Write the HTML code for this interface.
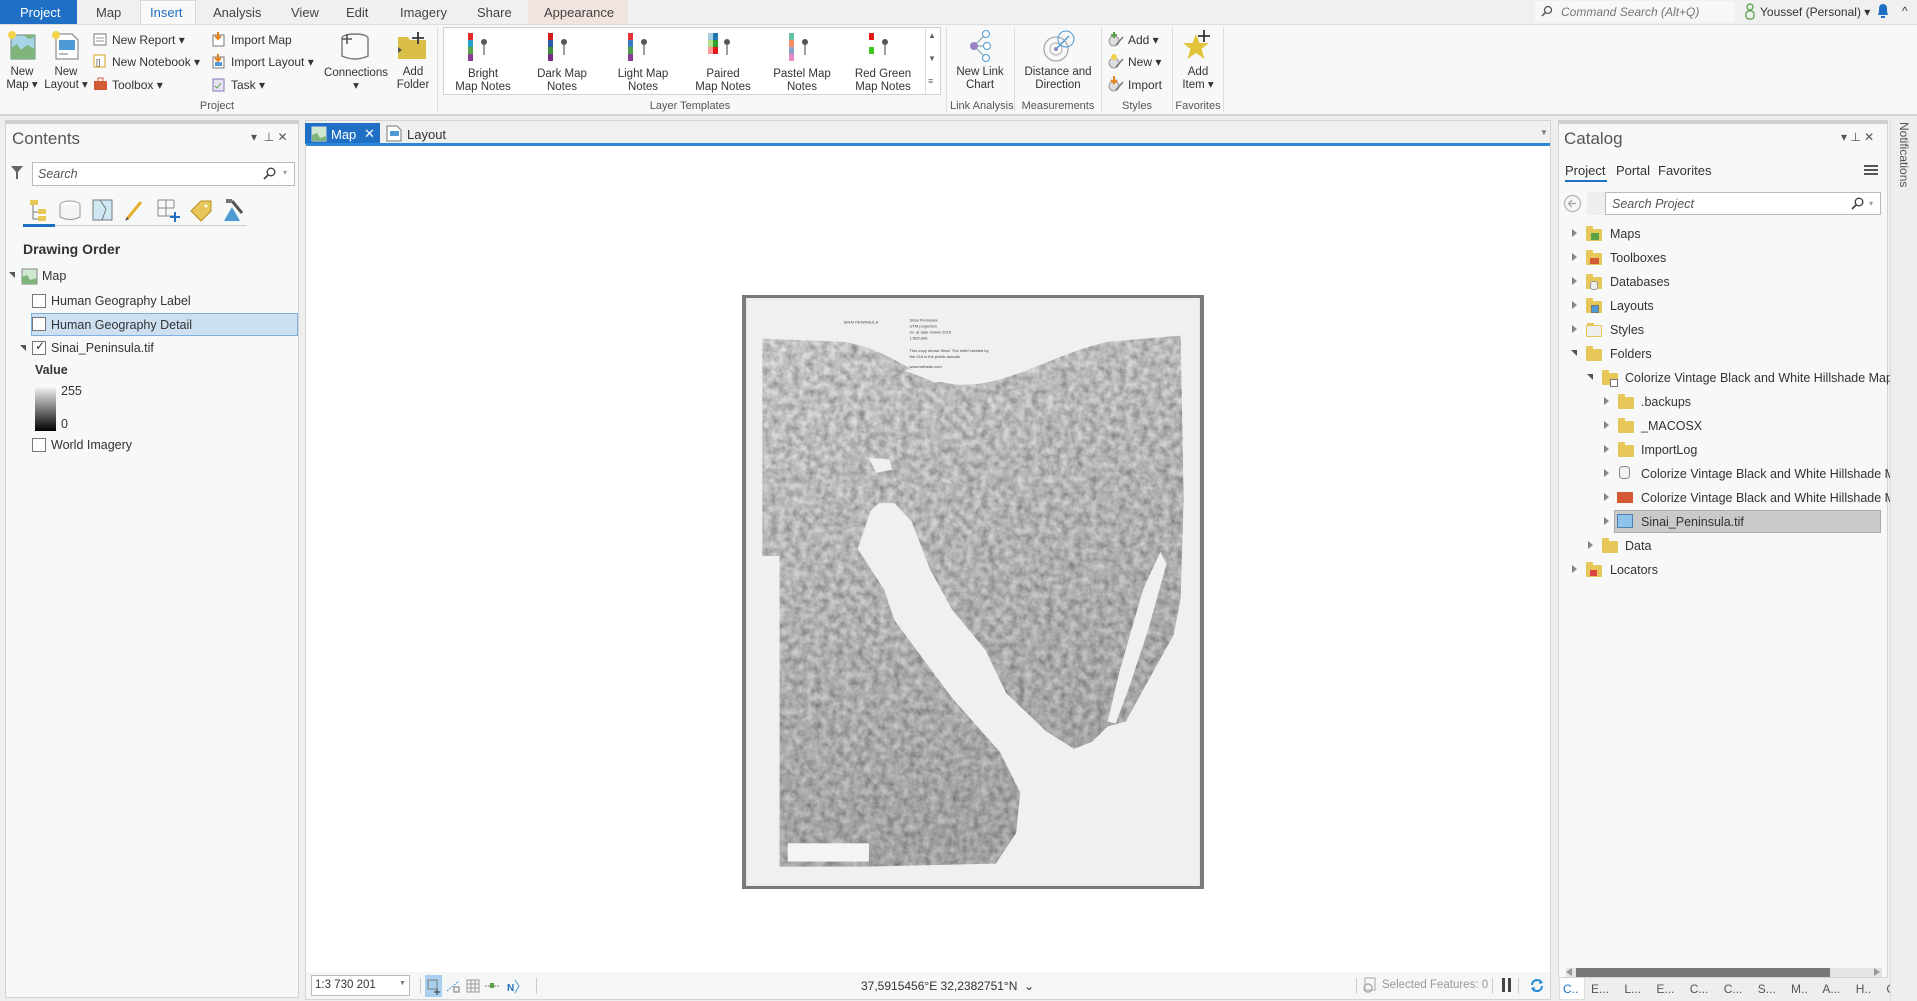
<!DOCTYPE html>
<html><head><meta charset="utf-8"><style>
*{box-sizing:border-box;margin:0;padding:0}
body{width:1917px;height:1001px;overflow:hidden;background:#eeeeee;font-family:"Liberation Sans",sans-serif;color:#333;position:relative}
.a{position:absolute;white-space:nowrap}
.t{font-size:13px;color:#444;top:5px}
.r{font-size:11.5px;color:#333;text-align:center;line-height:13px}
.g{font-size:11px;color:#555;top:100px;text-align:center}
.s{font-size:12px;color:#333}
.cb{position:absolute;width:14px;height:14px;border:1px solid #777;background:#fff}
.tr{font-size:12.5px;color:#333}
.tri{position:absolute;width:0;height:0;border-top:4px solid transparent;border-bottom:4px solid transparent;border-left:5px solid #888}
.fold{position:absolute;width:16px;height:12px;background:#e8c75a;border-radius:1px}
.fold:before{content:"";position:absolute;left:0;top:-3px;width:7px;height:3px;background:#e8c75a}
</style></head><body>
<div class="a" style="left:0;top:0;width:1917px;height:24px;background:#f0f0f0"></div>
<div class="a" style="left:0;top:0;width:77px;height:24px;background:#1f6fc5"></div>
<div class="a t" style="left:20px;color:#fff">Project</div>
<div class="a t" style="left:96px">Map</div>
<div class="a" style="left:140px;top:0;width:56px;height:25px;background:#f8f8f8;border:1px solid #d8d8d8;border-bottom:none"></div>
<div class="a t" style="left:150px;color:#1f6fc5">Insert</div>
<div class="a t" style="left:213px">Analysis</div>
<div class="a t" style="left:291px">View</div>
<div class="a t" style="left:346px">Edit</div>
<div class="a t" style="left:400px">Imagery</div>
<div class="a t" style="left:477px">Share</div>
<div class="a" style="left:528px;top:0;width:100px;height:24px;background:#f1e4df"></div>
<div class="a t" style="left:544px">Appearance</div>
<div class="a" style="left:1535px;top:1px;width:200px;height:21px;background:#f7f7f7"></div>
<svg class="a" style="left:1541px;top:5px" width="12" height="12"><circle cx="7" cy="5" r="3.5" fill="none" stroke="#555" stroke-width="1.3"/><line x1="4.5" y1="7.5" x2="1" y2="11" stroke="#555" stroke-width="1.5"/></svg>
<div class="a" style="left:1561px;top:5px;font-size:12px;font-style:italic;color:#777">Command Search (Alt+Q)</div>
<svg class="a" style="left:1744px;top:3px" width="12" height="17"><circle cx="6" cy="4" r="3" fill="none" stroke="#5aa347" stroke-width="1.3"/><rect x="2" y="8" width="8" height="8" rx="3" fill="none" stroke="#5aa347" stroke-width="1.3"/></svg>
<div class="a" style="left:1760px;top:5px;font-size:12px;color:#333">Youssef (Personal) ▾</div>
<svg class="a" style="left:1876px;top:2px" width="14" height="18"><path d="M2 13 Q3 11 3 7 Q3 2 7 2 Q11 2 11 7 Q11 11 12 13Z" fill="#1f6fc5"/><rect x="5" y="14" width="4" height="2" fill="#1f6fc5"/></svg>
<div class="a" style="left:1902px;top:4px;font-size:12px;color:#333">^</div>

<div class="a" style="left:0;top:24px;width:1917px;height:92px;background:#f8f8f8;border-top:1px solid #dcdcdc;border-bottom:2px solid #d6d6d6"></div>
<svg class="a" style="left:7px;top:30px" width="30" height="30"><rect x="4" y="5" width="24" height="24" fill="#a9d4e8" stroke="#6a8a7a"/><path d="M4 18 L10 14 L14 20 L20 15 L28 19 L28 29 L4 29Z" fill="#7fb57a"/><path d="M16 5 L22 9 L28 7 L28 5Z" fill="#7fb57a"/><circle cx="5" cy="5" r="4" fill="#f4d24c"/></svg>
<div class="a r" style="left:0;top:66px;width:44px">New<br>Map ▾</div>
<svg class="a" style="left:50px;top:30px" width="30" height="30"><path d="M6 4 L22 4 L28 10 L28 29 L6 29Z" fill="#fff" stroke="#777"/><rect x="9" y="10" width="16" height="10" fill="#4d9ad6"/><line x1="9" y1="24" x2="18" y2="24" stroke="#777"/><circle cx="6" cy="5" r="4" fill="#f4d24c"/></svg>
<div class="a r" style="left:44px;top:66px;width:44px">New<br>Layout ▾</div>
<svg class="a" style="left:93px;top:32px" width="15" height="14"><rect x="1" y="2" width="12" height="11" fill="#fff" stroke="#777"/><line x1="3" y1="6" x2="11" y2="6" stroke="#999"/><line x1="3" y1="9" x2="11" y2="9" stroke="#999"/></svg>
<div class="a s" style="left:112px;top:33px">New Report ▾</div>
<svg class="a" style="left:93px;top:54px" width="15" height="14"><rect x="1" y="1" width="11" height="12" fill="#fff" stroke="#d4a520"/><text x="3" y="11" font-size="8" fill="#555" font-family="Liberation Sans">[]</text></svg>
<div class="a s" style="left:112px;top:55px">New Notebook ▾</div>
<svg class="a" style="left:93px;top:77px" width="15" height="14"><rect x="1" y="4" width="13" height="9" fill="#d45a35"/><rect x="5" y="1" width="5" height="4" fill="none" stroke="#d45a35"/></svg>
<div class="a s" style="left:112px;top:78px">Toolbox ▾</div>
<svg class="a" style="left:211px;top:32px" width="15" height="15"><rect x="2" y="3" width="11" height="11" fill="#fff" stroke="#777"/><path d="M7 0 L7 7 M4 4 L7 7 L10 4" stroke="#e8821e" stroke-width="2" fill="none"/></svg>
<div class="a s" style="left:231px;top:33px">Import Map</div>
<svg class="a" style="left:211px;top:54px" width="15" height="15"><rect x="2" y="3" width="11" height="11" fill="#fff" stroke="#777"/><rect x="4" y="8" width="7" height="4" fill="#4d9ad6"/><path d="M7 0 L7 7 M4 4 L7 7 L10 4" stroke="#e8821e" stroke-width="2" fill="none"/></svg>
<div class="a s" style="left:231px;top:55px">Import Layout ▾</div>
<svg class="a" style="left:211px;top:77px" width="15" height="15"><rect x="2" y="2" width="11" height="12" fill="#e8e2f3" stroke="#8a76b8"/><path d="M4 9 L6 11 L10 6" stroke="#5aa347" fill="none"/></svg>
<div class="a s" style="left:231px;top:78px">Task ▾</div>
<svg class="a" style="left:339px;top:32px" width="32" height="30"><ellipse cx="16" cy="6" rx="13" ry="4" fill="#fafafa" stroke="#777" stroke-width="1.4"/><path d="M3 6 L3 24 Q16 30 29 24 L29 6" fill="#fafafa" stroke="#777" stroke-width="1.4"/><path d="M8 2 L8 12 M3 7 L13 7" stroke="#555" stroke-width="1.6"/></svg>
<div class="a r" style="left:320px;top:67px;width:72px">Connections<br>▾</div>
<svg class="a" style="left:396px;top:31px" width="32" height="30"><path d="M2 6 L12 6 L14 9 L30 9 L30 28 L2 28Z" fill="#d9bf46"/><path d="M22 1 L22 13 M16 7 L28 7" stroke="#333" stroke-width="1.8"/><path d="M2 16 L6 19 L2 22Z" fill="#555"/></svg>
<div class="a r" style="left:392px;top:66px;width:42px">Add<br>Folder</div>
<div class="a g" style="left:180px;width:74px">Project</div>
<div class="a" style="left:437px;top:28px;width:1px;height:84px;background:#ddd"></div>
<div class="a" style="left:443px;top:27px;width:498px;height:68px;background:#fff;border:1px solid #d0d0d0"></div>
<div class="a" style="left:925px;top:28px;width:15px;height:66px;border-left:1px solid #ddd"></div>
<div class="a" style="left:928px;top:31px;font-size:8px;color:#666">▲</div>
<div class="a" style="left:928px;top:54px;font-size:8px;color:#666">▼</div>
<div class="a" style="left:928px;top:76px;font-size:9px;color:#666">≡</div>
<svg class="a" style="left:468px;top:33px" width="30" height="30"><rect x="0" y="0" width="5" height="7" fill="#e02a2a"/><rect x="0" y="7" width="5" height="7" fill="#21a0c8"/><rect x="0" y="14" width="5" height="7" fill="#5aa347"/><rect x="0" y="21" width="5" height="7" fill="#8a3d96"/><circle cx="16" cy="9" r="3" fill="#555"/><line x1="16" y1="11" x2="16" y2="22" stroke="#777" stroke-width="1.4"/></svg>
<div class="a r" style="left:448px;top:68px;width:70px">Bright<br>Map Notes</div>
<svg class="a" style="left:548px;top:33px" width="30" height="30"><rect x="0" y="0" width="5" height="7" fill="#d01c1c"/><rect x="0" y="7" width="5" height="7" fill="#2a5aa8"/><rect x="0" y="14" width="5" height="7" fill="#3f8f3a"/><rect x="0" y="21" width="5" height="7" fill="#7a2b86"/><circle cx="16" cy="9" r="3" fill="#555"/><line x1="16" y1="11" x2="16" y2="22" stroke="#777" stroke-width="1.4"/></svg>
<div class="a r" style="left:527px;top:68px;width:70px">Dark Map<br>Notes</div>
<svg class="a" style="left:628px;top:33px" width="30" height="30"><rect x="0" y="0" width="5" height="7" fill="#e0303a"/><rect x="0" y="7" width="5" height="7" fill="#3a78c8"/><rect x="0" y="14" width="5" height="7" fill="#4aa04a"/><rect x="0" y="21" width="5" height="7" fill="#8a3d96"/><circle cx="16" cy="9" r="3" fill="#555"/><line x1="16" y1="11" x2="16" y2="22" stroke="#777" stroke-width="1.4"/></svg>
<div class="a r" style="left:608px;top:68px;width:70px">Light Map<br>Notes</div>
<svg class="a" style="left:708px;top:33px" width="30" height="30"><rect x="0" y="0" width="5" height="7" fill="#a6cee3"/><rect x="5" y="0" width="5" height="7" fill="#1f78b4"/><rect x="0" y="7" width="5" height="7" fill="#b2df8a"/><rect x="5" y="7" width="5" height="7" fill="#33a02c"/><rect x="0" y="14" width="5" height="7" fill="#fb9a99"/><rect x="5" y="14" width="5" height="7" fill="#e31a1c"/><circle cx="19" cy="9" r="3" fill="#555"/><line x1="19" y1="11" x2="19" y2="22" stroke="#777" stroke-width="1.4"/></svg>
<div class="a r" style="left:688px;top:68px;width:70px">Paired<br>Map Notes</div>
<svg class="a" style="left:789px;top:33px" width="30" height="30"><rect x="0" y="0" width="5" height="7" fill="#66c2a5"/><rect x="0" y="7" width="5" height="7" fill="#fc8d62"/><rect x="0" y="14" width="5" height="7" fill="#8da0cb"/><rect x="0" y="21" width="5" height="7" fill="#e78ac3"/><circle cx="16" cy="9" r="3" fill="#555"/><line x1="16" y1="11" x2="16" y2="22" stroke="#777" stroke-width="1.4"/></svg>
<div class="a r" style="left:767px;top:68px;width:70px">Pastel Map<br>Notes</div>
<svg class="a" style="left:869px;top:33px" width="30" height="30"><rect x="0" y="0" width="5" height="7" fill="#e01818"/><rect x="0" y="7" width="5" height="7" fill="#fff"/><rect x="0" y="14" width="5" height="7" fill="#3ec81e"/><rect x="0" y="21" width="5" height="7" fill="#fff"/><circle cx="16" cy="9" r="3" fill="#555"/><line x1="16" y1="11" x2="16" y2="22" stroke="#777" stroke-width="1.4"/></svg>
<div class="a r" style="left:848px;top:68px;width:70px">Red Green<br>Map Notes</div>
<div class="a g" style="left:640px;width:100px">Layer Templates</div>
<div class="a" style="left:946px;top:28px;width:1px;height:84px;background:#ddd"></div>
<svg class="a" style="left:965px;top:29px" width="30" height="33"><line x1="9" y1="17" x2="20" y2="6" stroke="#8aa" stroke-width="1.2"/><line x1="9" y1="17" x2="20" y2="17" stroke="#8aa" stroke-width="1.2"/><line x1="9" y1="17" x2="20" y2="28" stroke="#8aa" stroke-width="1.2"/><circle cx="9" cy="17" r="4" fill="#9b82c4"/><circle cx="21" cy="5" r="3.5" fill="#fff" stroke="#4d9ad6"/><circle cx="22" cy="17" r="3.5" fill="#fff" stroke="#4d9ad6"/><circle cx="21" cy="29" r="3.5" fill="#fff" stroke="#4d9ad6"/></svg>
<div class="a r" style="left:950px;top:66px;width:60px">New Link<br>Chart</div>
<div class="a g" style="left:950px;width:62px">Link Analysis</div>
<div class="a" style="left:1014px;top:28px;width:1px;height:84px;background:#ddd"></div>
<svg class="a" style="left:1042px;top:29px" width="34" height="34"><circle cx="14" cy="20" r="12" fill="none" stroke="#aaa" stroke-width="1.3"/><circle cx="14" cy="20" r="6" fill="none" stroke="#aaa"/><circle cx="14" cy="20" r="2" fill="#9b82c4"/><line x1="14" y1="20" x2="27" y2="7" stroke="#4d9ad6" stroke-width="1.4"/><circle cx="24" cy="10" r="8" fill="none" stroke="#4d9ad6"/></svg>
<div class="a r" style="left:1017px;top:66px;width:82px">Distance and<br>Direction</div>
<div class="a g" style="left:1017px;width:82px">Measurements</div>
<div class="a" style="left:1101px;top:28px;width:1px;height:84px;background:#ddd"></div>
<svg class="a" style="left:1108px;top:31px" width="16" height="16"><circle cx="6" cy="10" r="5" fill="#ddd" stroke="#999"/><path d="M6 1 L6 7 M3 4 L9 4" stroke="#5aa347" stroke-width="2"/><line x1="8" y1="14" x2="15" y2="6" stroke="#777" stroke-width="1.4"/></svg>
<div class="a s" style="left:1128px;top:33px">Add ▾</div>
<svg class="a" style="left:1108px;top:53px" width="16" height="16"><circle cx="6" cy="10" r="5" fill="#ddd" stroke="#999"/><circle cx="6" cy="4" r="3" fill="#f4d24c"/><line x1="8" y1="14" x2="15" y2="6" stroke="#777" stroke-width="1.4"/></svg>
<div class="a s" style="left:1128px;top:55px">New ▾</div>
<svg class="a" style="left:1108px;top:76px" width="16" height="16"><circle cx="6" cy="10" r="5" fill="#ddd" stroke="#999"/><path d="M6 0 L6 7 M3 4 L6 7 L9 4" stroke="#e8821e" stroke-width="2" fill="none"/><line x1="8" y1="14" x2="15" y2="6" stroke="#777" stroke-width="1.4"/></svg>
<div class="a s" style="left:1128px;top:78px">Import</div>
<div class="a g" style="left:1104px;width:66px">Styles</div>
<div class="a" style="left:1172px;top:28px;width:1px;height:84px;background:#ddd"></div>
<svg class="a" style="left:1183px;top:30px" width="30" height="32"><path d="M13 4 L16.5 13 L26 13 L18.5 19 L21.5 29 L13 23 L4.5 29 L7.5 19 L0 13 L9.5 13Z" fill="#e2c43c"/><path d="M21 0 L21 12 M15 6 L27 6" stroke="#333" stroke-width="1.8"/></svg>
<div class="a r" style="left:1176px;top:66px;width:44px">Add<br>Item ▾</div>
<div class="a g" style="left:1174px;width:48px">Favorites</div>
<div class="a" style="left:1223px;top:28px;width:1px;height:84px;background:#ddd"></div>

<div class="a" style="left:5px;top:120px;width:294px;height:878px;background:#f7f8f8;border:1px solid #d4d4d4;border-top:4px solid #cfcfcf"></div>
<div class="a" style="left:12px;top:129px;font-size:17px;color:#555">Contents</div>
<div class="a" style="left:251px;top:130px;font-size:12px;color:#555">▾ &nbsp;⊥ ✕</div>
<svg class="a" style="left:10px;top:165px" width="14" height="16"><path d="M1 1 L13 1 L8 7 L8 14 L6 14 L6 7Z" fill="#666"/></svg>
<div class="a" style="left:32px;top:162px;width:263px;height:24px;background:#fff;border:1px solid #bbb"></div>
<div class="a" style="left:38px;top:167px;font-size:12.5px;font-style:italic;color:#555">Search</div>
<svg class="a" style="left:263px;top:167px" width="14" height="14"><circle cx="8" cy="5" r="3.8" fill="none" stroke="#444" stroke-width="1.4"/><line x1="5" y1="8" x2="1" y2="12" stroke="#444" stroke-width="1.8"/></svg>
<div class="a" style="left:283px;top:168px;font-size:8px;color:#999">▾</div>
<svg class="a" style="left:28px;top:197px" width="240" height="26">
<rect x="2" y="3" width="8" height="5" fill="#e8c75a"/><rect x="10" y="12" width="8" height="5" fill="#e8c75a"/><rect x="10" y="19" width="8" height="5" fill="#e8c75a"/><path d="M5 8 L5 22 L10 22 M5 15 L10 15" stroke="#777" fill="none"/>
<ellipse cx="42" cy="8" rx="10" ry="4" fill="#fff" stroke="#999"/><path d="M32 8 L32 20 Q42 25 52 20 L52 8" fill="#f4f4f4" stroke="#999"/>
<rect x="65" y="3" width="19" height="20" fill="#cfe8f3" stroke="#777"/><path d="M72 3 L78 12 L74 23" stroke="#777" fill="none"/>
<line x1="99" y1="22" x2="113" y2="5" stroke="#e8b030" stroke-width="3"/><path d="M97 24 L99 20 L101 22Z" fill="#555"/>
<path d="M130 3 L130 19 L146 19 M130 11 L146 11 M138 3 L138 19 M130 3 L146 3 M146 3 L146 11" stroke="#888" fill="none"/><path d="M147 15 L147 25 M142 20 L152 20" stroke="#1f6fc5" stroke-width="2"/>
<path d="M163 14 L173 4 L183 4 L183 14 L173 24Z" fill="#e8c75a" stroke="#b98f20"/><circle cx="178" cy="9" r="1.5" fill="#fff"/>
<path d="M196 24 L204 10 L212 24Z" fill="#4d9ad6"/><path d="M204 4 L214 16" stroke="#555" stroke-width="3"/><rect x="198" y="2" width="6" height="4" fill="#777"/>
</svg>
<div class="a" style="left:23px;top:225px;width:224px;height:1px;background:#ccc"></div>
<div class="a" style="left:23px;top:224px;width:32px;height:3px;background:#1f6fc5"></div>
<div class="a" style="left:23px;top:241px;font-size:14px;font-weight:bold;color:#333">Drawing Order</div>
<div class="a" style="left:9px;top:272px;width:0;height:0;border-left:6px solid transparent;border-top:6px solid #555"></div>
<svg class="a" style="left:21px;top:268px" width="17" height="17"><rect x="1" y="1" width="15" height="15" fill="#cfe8cf" stroke="#888"/><path d="M1 9 L6 7 L9 12 L16 10 L16 16 L1 16Z" fill="#7fb57a"/></svg>
<div class="a tr" style="left:42px;top:269px">Map</div>
<div class="cb" style="left:32px;top:294px"></div>
<div class="a tr" style="left:51px;top:294px">Human Geography Label</div>
<div class="a" style="left:31px;top:313px;width:267px;height:23px;background:#cde0f2;border:1px solid #7fb0df"></div>
<div class="cb" style="left:32px;top:317px"></div>
<div class="a tr" style="left:51px;top:318px">Human Geography Detail</div>
<div class="a" style="left:20px;top:345px;width:0;height:0;border-left:6px solid transparent;border-top:6px solid #555"></div>
<div class="cb" style="left:32px;top:341px"></div>
<div class="a" style="left:35px;top:339px;font-size:12px;color:#333">✓</div>
<div class="a tr" style="left:51px;top:341px">Sinai_Peninsula.tif</div>
<div class="a" style="left:35px;top:363px;font-size:12.5px;font-weight:bold;color:#333">Value</div>
<div class="a" style="left:35px;top:385px;width:21px;height:46px;background:linear-gradient(#fff,#000)"></div>
<div class="a tr" style="left:61px;top:384px">255</div>
<div class="a tr" style="left:61px;top:417px">0</div>
<div class="cb" style="left:32px;top:438px"></div>
<div class="a tr" style="left:51px;top:438px">World Imagery</div>

<div class="a" style="left:305px;top:120px;width:1246px;height:880px;background:#fff;border:1px solid #d4d4d4"></div>
<div class="a" style="left:306px;top:121px;width:1244px;height:22px;background:#f0f0f0"></div>
<div class="a" style="left:305px;top:123px;width:75px;height:21px;background:#1f6fc5"></div>
<svg class="a" style="left:311px;top:126px" width="16" height="16"><rect x="1" y="1" width="14" height="14" fill="#cfe8cf" stroke="#ddd"/><path d="M1 9 L6 7 L9 12 L15 10 L15 15 L1 15Z" fill="#7fb57a"/></svg>
<div class="a" style="left:331px;top:127px;font-size:13px;color:#fff">Map</div>
<div class="a" style="left:364px;top:126px;font-size:13px;color:#fff">✕</div>
<svg class="a" style="left:386px;top:125px" width="16" height="17"><path d="M1 1 L11 1 L15 5 L15 16 L1 16Z" fill="#fff" stroke="#777"/><rect x="4" y="6" width="9" height="5" fill="#4d9ad6"/></svg>
<div class="a" style="left:407px;top:127px;font-size:13px;color:#333">Layout</div>
<div class="a" style="left:1540px;top:128px;font-size:8px;color:#777">▼</div>
<div class="a" style="left:306px;top:143px;width:1244px;height:3px;background:#2d86d6"></div>

<svg class="a" style="left:742px;top:295px" width="462" height="594" viewBox="0 0 455 585" preserveAspectRatio="none">
<defs>
<filter id="tx" x="0" y="0" width="100%" height="100%"><feTurbulence type="fractalNoise" baseFrequency="0.14" numOctaves="3" seed="3" result="n"/><feColorMatrix in="n" type="matrix" values="0.9 0 0 0 0.25  0.9 0 0 0 0.25  0.9 0 0 0 0.25  0 0 0 0 1" result="m"/><feComposite in="m" in2="SourceGraphic" operator="in" result="mi"/><feBlend in="mi" in2="SourceGraphic" mode="multiply"/></filter>
<linearGradient id="lg" x1="0" y1="0" x2="0.3" y2="1"><stop offset="0" stop-color="#e4e4e4"/><stop offset="0.4" stop-color="#d4d4d4"/><stop offset="1" stop-color="#bcbcbc"/></linearGradient>
</defs>
<rect x="0" y="0" width="455" height="585" fill="#7a7a7a"/>
<rect x="4" y="3" width="447" height="579" fill="#f0f0f0"/>
<path d="M20 43 L100 46 C150 54 170 84 210 88 C260 92 300 60 360 46 L432 40 L435 200 L432 300 L425 335 L400 380 L378 420 L360 425 L345 440 L327 447 L300 430 L260 392 L240 350 L207 310 L185 270 L167 223 L150 205 L135 205 L127 212 L114 250 L140 290 L150 320 L207 397 L254 450 L274 490 L270 530 L250 560 L124 563 L37 563 L37 257 L20 257Z" fill="url(#lg)" filter="url(#tx)"/>
<path d="M412 253 L418 265 L400 330 L380 390 L368 422 L360 420 L372 370 L395 290Z" fill="#f0f0f0"/>
<path d="M125 160 L145 162 L148 172 L132 175Z" fill="#f0f0f0"/>
<path d="M160 74 L200 72 L212 84 L190 86Z" fill="#f0f0f0"/>
<g fill="#444" font-size="4" font-family="Liberation Sans"><text x="100" y="28">SINAI PENINSULA</text><text x="165" y="26">Sinai Peninsula</text><text x="165" y="32">UTM projection</text><text x="165" y="38">Gr. at date shows 2010</text><text x="165" y="44">1:500,000</text><text x="165" y="56">This copy shows Sinai. The relief created by</text><text x="165" y="62">the CIA in the public domain</text><text x="165" y="72">www.website.com</text></g>
<rect x="45" y="540" width="80" height="18" fill="#f4f4f4"/>
</svg>

<div class="a" style="left:306px;top:972px;width:1244px;height:27px;background:#f5f6f6"></div>
<div class="a" style="left:311px;top:975px;width:99px;height:21px;background:#fff;border:1px solid #bbb"></div>
<div class="a" style="left:315px;top:979px;font-size:11.5px;color:#333">1:3 730 201</div>
<div class="a" style="left:399px;top:980px;font-size:7px;color:#777">▼</div>
<div class="a" style="left:420px;top:978px;width:1px;height:16px;background:#ccc"></div>
<div class="a" style="left:425px;top:975px;width:17px;height:22px;background:#a9d0f0"></div>
<svg class="a" style="left:425px;top:977px" width="100" height="20"><rect x="3" y="3" width="9" height="9" fill="none" stroke="#777"/><path d="M12 12 L12 18 M9 15 L15 15" stroke="#333"/><path d="M22 14 L34 4" stroke="#4d9ad6" stroke-dasharray="2 1"/><rect x="29" y="10" width="5" height="5" fill="none" stroke="#777"/><rect x="42" y="3" width="12" height="12" fill="none" stroke="#999"/><path d="M42 7 L54 7 M42 11 L54 11 M46 3 L46 15 M50 3 L50 15" stroke="#999"/><path d="M60 9 L74 9" stroke="#777" stroke-dasharray="2 1"/><rect x="65" y="6" width="4" height="5" fill="#5aa347"/><text x="82" y="14" font-size="10" font-weight="bold" fill="#1f6fc5" font-family="Liberation Sans">N</text><path d="M90 3 L94 9 L90 16" stroke="#4d9ad6" fill="none"/></svg>
<div class="a" style="left:536px;top:978px;width:1px;height:16px;background:#ccc"></div>
<div class="a" style="left:861px;top:979px;font-size:12px;color:#333">37,5915456°E 32,2382751°N &nbsp;⌄</div>
<div class="a" style="left:1356px;top:978px;width:1px;height:16px;background:#ccc"></div>
<svg class="a" style="left:1362px;top:977px" width="16" height="17"><rect x="3" y="1" width="10" height="12" fill="none" stroke="#aaa"/><circle cx="6" cy="11" r="4" fill="none" stroke="#aaa" stroke-width="1.4"/></svg>
<div class="a" style="left:1382px;top:979px;font-size:11.5px;color:#999">Selected Features: 0</div>
<div class="a" style="left:1492px;top:978px;width:1px;height:16px;background:#ccc"></div>
<div class="a" style="left:1502px;top:978px;width:3px;height:14px;background:#444"></div>
<div class="a" style="left:1508px;top:978px;width:3px;height:14px;background:#444"></div>
<div class="a" style="left:1518px;top:978px;width:1px;height:16px;background:#ccc"></div>
<svg class="a" style="left:1529px;top:977px" width="16" height="17"><path d="M3 8 A5 5 0 0 1 12 5 M13 9 A5 5 0 0 1 4 12" stroke="#1f8ad6" stroke-width="2" fill="none"/><path d="M11 2 L14 6 L10 7Z M5 15 L2 11 L6 10Z" fill="#1f8ad6"/></svg>

<div class="a" style="left:1558px;top:120px;width:330px;height:858px;background:#f7f8f8;border:1px solid #d4d4d4;border-top:4px solid #cfcfcf"></div>
<div class="a" style="left:1564px;top:129px;font-size:17px;color:#555">Catalog</div>
<div class="a" style="left:1841px;top:130px;font-size:12px;color:#555">▾ ⊥ ✕</div>
<div class="a" style="left:1565px;top:163px;font-size:13px;color:#333">Project</div>
<div class="a" style="left:1565px;top:180px;width:42px;height:2px;background:#1f6fc5"></div>
<div class="a" style="left:1616px;top:163px;font-size:13px;color:#333">Portal</div>
<div class="a" style="left:1658px;top:163px;font-size:13px;color:#333">Favorites</div>
<div class="a" style="left:1864px;top:165px;width:14px;height:2px;background:#555;box-shadow:0 4px 0 #555,0 8px 0 #555"></div>
<svg class="a" style="left:1563px;top:194px" width="19" height="19"><circle cx="9.5" cy="9.5" r="8" fill="none" stroke="#bbb" stroke-width="1.4"/><path d="M13 9.5 L6 9.5 M9 6 L5.5 9.5 L9 13" stroke="#aaa" stroke-width="1.4" fill="none"/></svg>
<div class="a" style="left:1587px;top:192px;width:18px;height:23px;background:#eee"></div>
<div class="a" style="left:1605px;top:192px;width:276px;height:23px;background:#fff;border:1px solid #bbb"></div>
<div class="a" style="left:1612px;top:197px;font-size:12.5px;font-style:italic;color:#555">Search Project</div>
<svg class="a" style="left:1851px;top:197px" width="14" height="14"><circle cx="8" cy="5" r="3.8" fill="none" stroke="#444" stroke-width="1.4"/><line x1="5" y1="8" x2="1" y2="12" stroke="#444" stroke-width="1.8"/></svg>
<div class="a" style="left:1869px;top:199px;font-size:8px;color:#999">▾</div>

<div class="tri" style="left:1572px;top:229px"></div><div class="fold" style="left:1586px;top:229px"></div><div class="a" style="left:1591px;top:233px;width:8px;height:7px;background:#5aa347"></div><div class="a tr" style="left:1610px;top:227px">Maps</div>
<div class="tri" style="left:1572px;top:253px"></div><div class="fold" style="left:1586px;top:253px"></div><div class="a" style="left:1590px;top:258px;width:9px;height:6px;background:#d45a35"></div><div class="a tr" style="left:1610px;top:251px">Toolboxes</div>
<div class="tri" style="left:1572px;top:277px"></div><div class="fold" style="left:1586px;top:277px"></div><div class="a" style="left:1590px;top:281px;width:8px;height:9px;background:#eee;border:1px solid #999;border-radius:3px"></div><div class="a tr" style="left:1610px;top:275px">Databases</div>
<div class="tri" style="left:1572px;top:301px"></div><div class="fold" style="left:1586px;top:301px"></div><div class="a" style="left:1591px;top:305px;width:8px;height:8px;background:#4d9ad6;border:1px solid #777"></div><div class="a tr" style="left:1610px;top:299px">Layouts</div>
<div class="tri" style="left:1572px;top:325px"></div><div class="fold" style="left:1586px;top:325px;background:#eee;border:1px solid #e8c75a"></div><div class="a tr" style="left:1610px;top:323px">Styles</div>
<div class="a" style="left:1571px;top:350px;width:0;height:0;border-left:6px solid transparent;border-top:6px solid #555"></div><div class="fold" style="left:1586px;top:349px"></div><div class="a tr" style="left:1610px;top:347px">Folders</div>
<div class="a" style="left:1587px;top:374px;width:0;height:0;border-left:6px solid transparent;border-top:6px solid #555"></div><div class="fold" style="left:1602px;top:373px"></div><div class="a" style="left:1610px;top:379px;width:8px;height:8px;background:#fff;border:1px solid #777"></div><div class="a tr" style="left:1625px;top:371px">Colorize Vintage Black and White Hillshade Map</div>
<div class="tri" style="left:1604px;top:397px"></div><div class="fold" style="left:1618px;top:397px"></div><div class="a tr" style="left:1641px;top:395px">.backups</div>
<div class="tri" style="left:1604px;top:421px"></div><div class="fold" style="left:1618px;top:421px"></div><div class="a tr" style="left:1641px;top:419px">_MACOSX</div>
<div class="tri" style="left:1604px;top:445px"></div><div class="fold" style="left:1618px;top:445px"></div><div class="a tr" style="left:1641px;top:443px">ImportLog</div>
<div class="tri" style="left:1604px;top:469px"></div><div class="a" style="left:1619px;top:466px;width:11px;height:13px;border:1px solid #888;border-radius:4px/3px;background:#f4f4f4"></div><div class="a tr" style="left:1641px;top:467px">Colorize Vintage Black and White Hillshade M</div>
<div class="tri" style="left:1604px;top:493px"></div><div class="a" style="left:1617px;top:492px;width:16px;height:11px;background:#d45a35"></div><div class="a tr" style="left:1641px;top:491px">Colorize Vintage Black and White Hillshade M</div>
<div class="a" style="left:1614px;top:510px;width:267px;height:23px;background:#cacaca;border:1px solid #aaa"></div>
<div class="tri" style="left:1604px;top:517px"></div><div class="a" style="left:1617px;top:514px;width:16px;height:14px;background:#8ec4ec;border:1px solid #4d7fb0"></div><div class="a tr" style="left:1641px;top:515px">Sinai_Peninsula.tif</div>
<div class="tri" style="left:1588px;top:541px"></div><div class="fold" style="left:1602px;top:541px"></div><div class="a tr" style="left:1625px;top:539px">Data</div>
<div class="tri" style="left:1572px;top:565px"></div><div class="fold" style="left:1586px;top:565px"></div><div class="a" style="left:1590px;top:570px;width:7px;height:6px;background:#d44"></div><div class="a tr" style="left:1610px;top:563px">Locators</div>

<div class="a" style="left:1566px;top:968px;width:316px;height:9px;background:#e4e4e4"></div>
<div class="a" style="left:1576px;top:968px;width:254px;height:9px;background:#777"></div>
<div class="a" style="left:1566px;top:968px;width:0;height:0;border-top:4px solid transparent;border-bottom:4px solid transparent;border-right:6px solid #999"></div>
<div class="a" style="left:1874px;top:968px;width:0;height:0;border-top:4px solid transparent;border-bottom:4px solid transparent;border-left:6px solid #999"></div>
<div class="a" style="left:1559px;top:978px;width:26px;height:22px;background:#fff;border:1px solid #ddd;border-top:none"></div>
<div class="a" style="left:1563px;top:982px;font-size:12px;color:#1f6fc5">C..</div>
<div class="a" style="left:1591px;top:982px;font-size:12px;color:#555;word-spacing:12px">E... L... E... C... C... S... M.. A... H.. G... P...</div>

<div class="a" style="left:1890px;top:118px;width:27px;height:883px;background:#eeeeee;border-left:1px solid #ddd"></div>
<div class="a" style="left:1897px;top:122px;font-size:12px;color:#555;writing-mode:vertical-rl">Notifications</div>
</body></html>
